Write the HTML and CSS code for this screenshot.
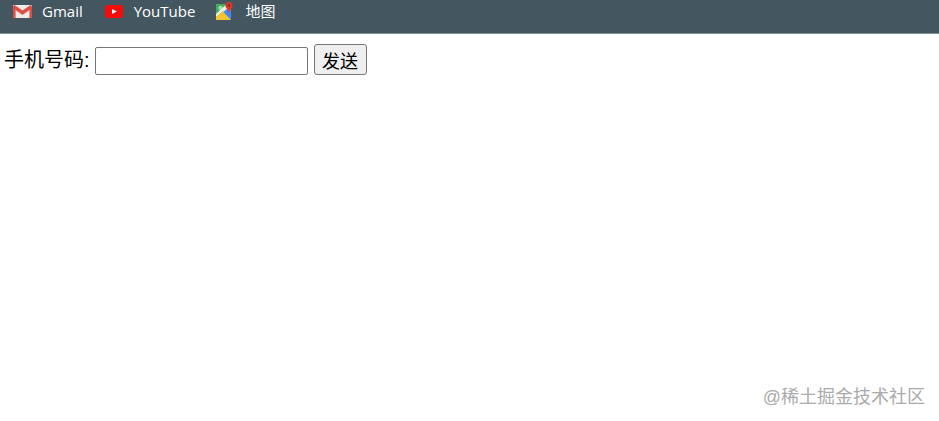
FILE: index.html
```html
<!DOCTYPE html>
<html lang="zh">
<head>
<meta charset="utf-8">
<title>手机号码</title>
<link rel="stylesheet" href="styles.css">
</head>
<body>
<nav class="bar">
  <a class="mark">
    <svg class="icon icon-mail" viewBox="0 0 19 13" width="19" height="13"><rect width="19" height="13" rx="1" fill="#f1ebe8"/><path d="M0 1.5V13H2.6V5L9.5 10L16.4 5V13H19V1.5L17.5 0L9.5 5.6L1.5 0Z" fill="#dc4f45"/></svg>
    <span>Gmail</span>
  </a>
  <a class="mark">
    <svg class="icon" viewBox="0 0 18 13" width="18" height="13"><rect width="18" height="13" rx="3" fill="#f60a0a"/><path d="M7 4L12 6.5L7 9Z" fill="#fff"/></svg>
    <span>YouTube</span>
  </a>
  <a class="mark mark-map">
    <svg class="icon icon-map" viewBox="0 0 18 18" width="18" height="18"><rect y="2" width="15" height="16" fill="#3fae5a"/><circle cx="4.5" cy="6" r="2.2" fill="#a5dcb4"/><path d="M0 18V15L7 9L15 18Z" fill="#f4c430"/><path d="M0 15V12L9 3.5L15 9V18L7 9Z" fill="#f3efe4"/><path d="M7.5 10L12 6L15 9V18H15Z" fill="#4285f4"/><path d="M13 0C10.7 0 9.4 1.7 9.4 3.5C9.4 5.8 12 7.5 13 10.5C14 7.5 16.6 5.8 16.6 3.5C16.6 1.7 15.3 0 13 0Z" fill="#d9392f"/><circle cx="13" cy="3.5" r="1.2" fill="#8e2420"/></svg>
    <span>地图</span>
  </a>
</nav>
<form class="row">
  <label class="label" for="phone">手机号码:</label>
  <input class="field" id="phone" type="text">
  <button class="send" type="button">发送</button>
</form>
<div class="stamp">@稀土掘金技术社区</div>
</body>
</html>
```
FILE: styles.css
```css
html, body {
  margin: 0;
  height: 421px;
  overflow: hidden;
}
body {
  background: #fff;
  color: #000;
  font-family: "Liberation Sans", "Noto Sans CJK SC", sans-serif;
  position: relative;
}
.bar {
  height: 33px;
  background: #445760;
  border-bottom: 1px solid #7d8f93;
  display: flex;
  align-items: flex-start;
  gap: 22px;
  padding-left: 13px;
  color: #fff;
  font-family: "Open Sans", "Noto Sans CJK SC", sans-serif;
  font-size: 15px;
}
.mark {
  display: flex;
  align-items: center;
  height: 22px;
  gap: 11px;
}
.mark-map { margin-left: -1px; }
.mark span { line-height: 22px; }
.icon { display: block; flex: none; }
.icon-mail { margin-right: -1px; }
.row {
  display: flex;
  align-items: flex-end;
  padding: 10px 0 0 4px;
  font-size: 20px;
}
.label { line-height: 30px; }
.field {
  box-sizing: border-box;
  width: 213px;
  height: 28px;
  margin-left: 5px;
  border: 1px solid #767676;
  border-radius: 2px;
  padding: 1px 2px;
  background: #fff;
  font-size: 18px;
}
.send {
  box-sizing: border-box;
  width: 53px;
  height: 31px;
  margin-left: 6px;
  padding: 0;
  border: 1px solid #767676;
  border-radius: 3px;
  background: #efefef;
  color: #000;
  font: 18px "Liberation Sans", "Noto Sans CJK SC", sans-serif;
}
.stamp {
  position: absolute;
  right: 14px;
  bottom: 13px;
  color: #aaa;
  font-size: 18px;
  line-height: 22px;
}
```
